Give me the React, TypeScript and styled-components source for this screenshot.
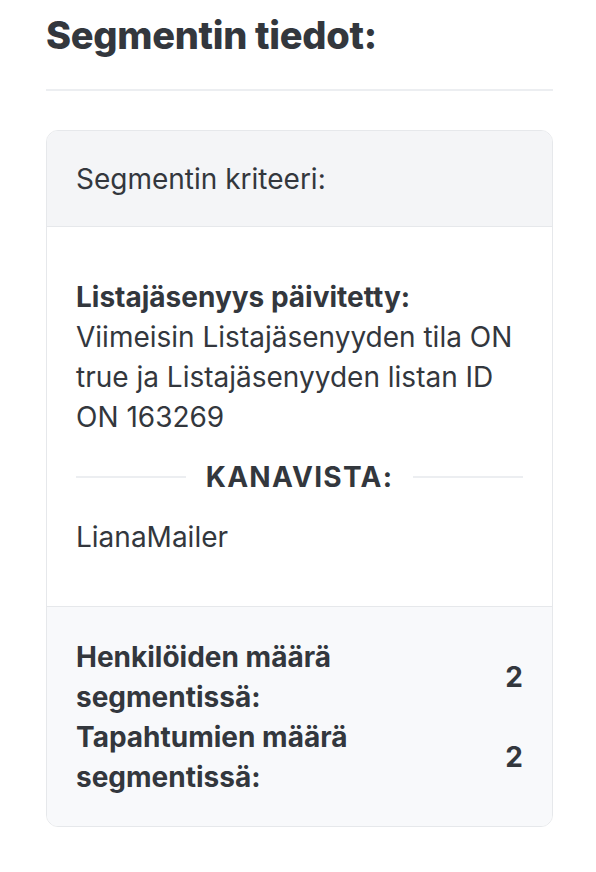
import React from 'react';
import styled, {createGlobalStyle} from 'styled-components';

const GlobalStyle = createGlobalStyle`
  html, body {
    margin: 0;
    padding: 0;
    background: #ffffff;
  }
  body {
    font-family: Inter, "Liberation Sans", sans-serif;
    color: #33373d;
  }
`;

const Page = styled.main`
  padding: 11px 43px 40px 46px;
`;

const Title = styled.h1`
  margin: 0;
  font-family: Inter, "Liberation Sans", sans-serif;
  font-size: 38px;
  line-height: 48px;
  font-weight: 800;
  letter-spacing: -0.3px;
  color: #33373d;
`;

const Rule = styled.hr`
  margin: 30px 0 39px;
  border: 0;
  height: 2px;
  background: #eceef1;
`;

const Card = styled.section`
  border: 1px solid #e6e8eb;
  border-radius: 12px;
  overflow: hidden;
`;

const CardHeader = styled.header`
  height: 95px;
  display: flex;
  align-items: center;
  padding: 0 29px;
  background: #f4f5f7;
  border-bottom: 1px solid #e6e8eb;
  font-size: 28px;
`;

const CardBody = styled.div`
  padding: 50px 29px 49px;
  font-size: 28px;
  line-height: 40px;
`;

const Criterion = styled.p`
  margin: 0;
`;

const Label = styled.b`
  display: block;
  font-weight: 700;
`;

const Separator = styled.div`
  display: flex;
  align-items: center;
  gap: 20px;
  margin: 20px 0;

  &::before,
  &::after {
    content: '';
    flex: 1;
    height: 2px;
    background: #eceef1;
  }
`;

const SeparatorText = styled.span`
  font-size: 28px;
  font-weight: 700;
  letter-spacing: 1.3px;
`;

const CardFooter = styled.footer`
  padding: 30px 29px 29px;
  background: #f8f9fb;
  border-top: 1px solid #e6e8eb;
`;

const StatRow = styled.div`
  display: flex;
  align-items: center;
  justify-content: space-between;
  font-size: 28px;
  line-height: 40px;
  font-weight: 700;
`;

const StatLabel = styled.span`
  max-width: 340px;
`;

const StatValue = styled.span`
  font-size: 28px;
`;

const stats = [
    {label: 'Henkilöiden määrä segmentissä:', value: 2},
    {label: 'Tapahtumien määrä segmentissä:', value: 2},
];

function App() {
    return (
        <>
            <GlobalStyle/>
            <Page>
                <Title>Segmentin tiedot:</Title>
                <Rule/>
                <Card>
                    <CardHeader>Segmentin kriteeri:</CardHeader>
                    <CardBody>
                        <Criterion>
                            <Label>Listajäsenyys päivitetty:</Label>
                            Viimeisin Listajäsenyyden tila ON true ja Listajäsenyyden listan ID ON 163269
                        </Criterion>
                        <Separator>
                            <SeparatorText>KANAVISTA:</SeparatorText>
                        </Separator>
                        <Criterion>LianaMailer</Criterion>
                    </CardBody>
                    <CardFooter>
                        {stats.map(s => (
                            <StatRow key={s.label}>
                                <StatLabel>{s.label}</StatLabel>
                                <StatValue>{s.value}</StatValue>
                            </StatRow>
                        ))}
                    </CardFooter>
                </Card>
            </Page>
        </>
    );
}

export default App;
